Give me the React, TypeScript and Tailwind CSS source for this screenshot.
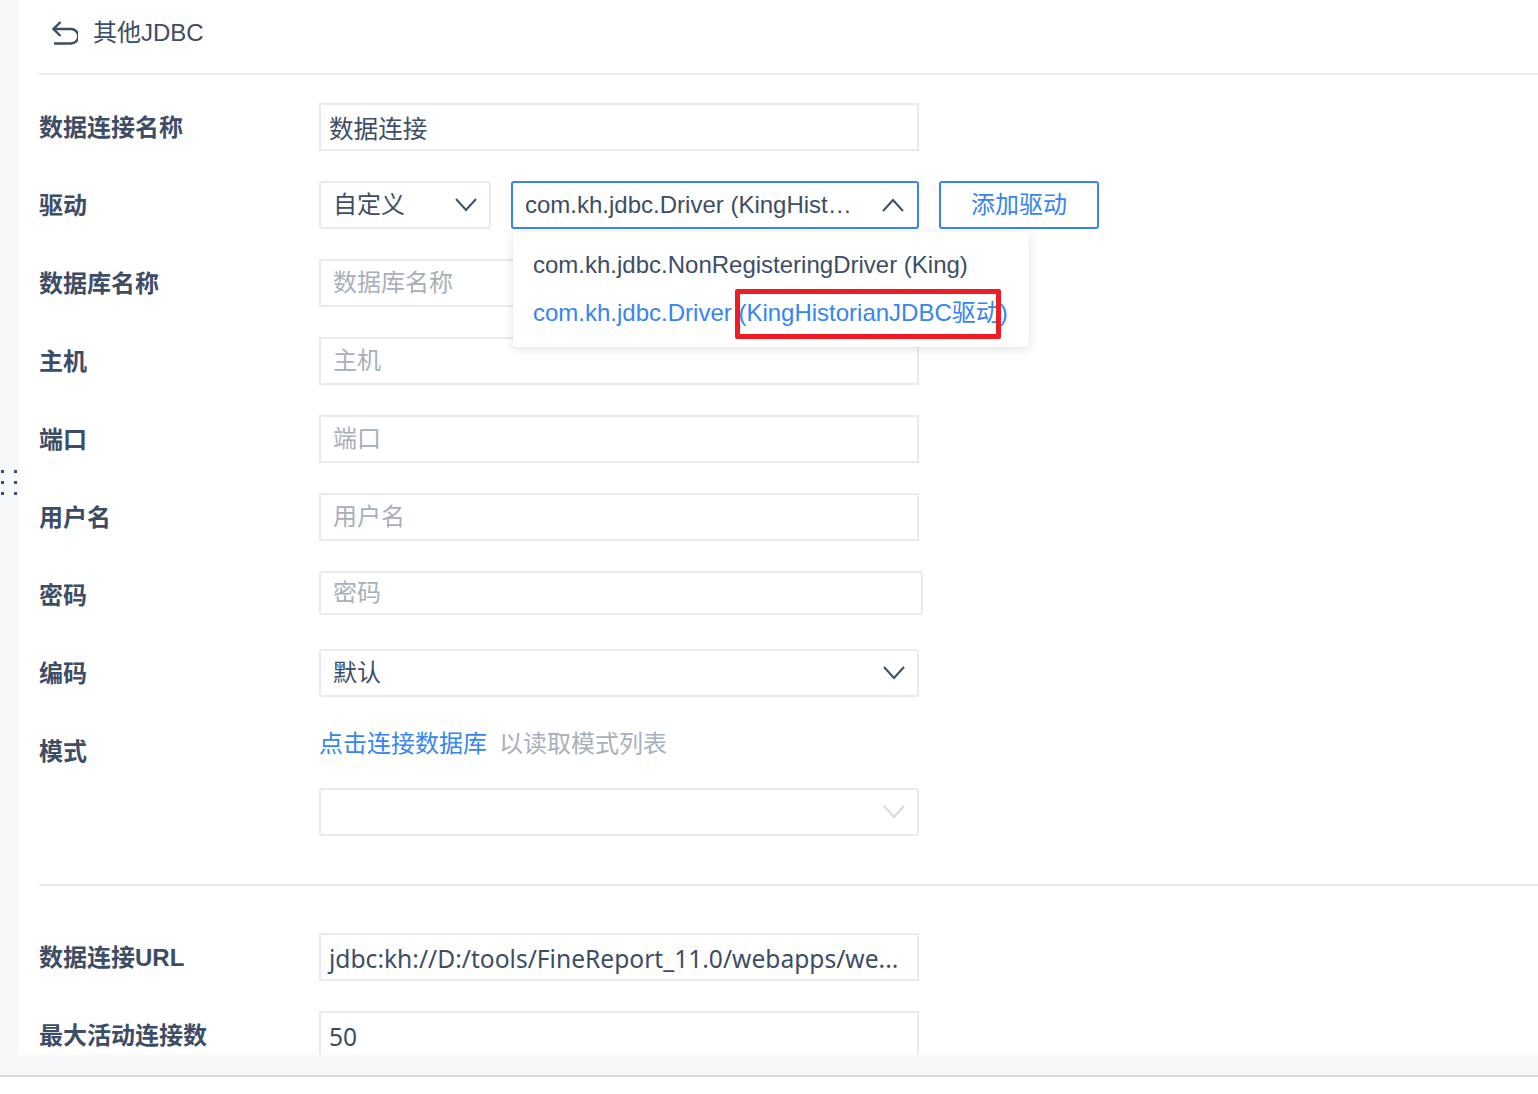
const font = "font-['Liberation_Sans','Noto_Sans_CJK_SC',sans-serif]";
const labelCls = 'w-[280px] shrink-0 h-[48px] leading-[50px] text-[24px] font-bold text-[#3d4d66]';

function Chevron({ up = false, light = false }: { up?: boolean; light?: boolean }) {
  return (
    <svg width="24" height="16" viewBox="0 0 24 16" fill="none" stroke={light ? '#d5d9e0' : '#3d4d66'} strokeWidth="2">
      <path d={up ? 'M2 14 L12 3 L22 14' : 'M2 2 L12 13 L22 2'} />
    </svg>
  );
}

function Row({ label, children }: { label: string; children: React.ReactNode }) {
  return (
    <div className="flex mb-[30px]">
      <div className={labelCls}>{label}</div>
      {children}
    </div>
  );
}

function Input({ placeholder, h = 'h-[48px]', w = 'w-[600px]', rounded = '' }: { placeholder: string; h?: string; w?: string; rounded?: string }) {
  return (
    <div className={`${w} ${h} border-2 border-[#e8eaed] ${rounded} bg-white flex items-center text-[24px] whitespace-nowrap pl-[12px] text-[#a8afbb]`}>
      {placeholder}
    </div>
  );
}

function ValueInput({ value }: { value: string }) {
  return (
    <div className="w-[600px] h-[48px] border-2 border-[#e8eaed] bg-white text-[24.6px] leading-[48px] font-['Noto_Sans','Noto_Sans_CJK_SC',sans-serif] whitespace-nowrap overflow-hidden pl-[8px] text-[#3d4d66]">
      {value}
    </div>
  );
}

function Select({ value, w = 'w-[600px]', light = false }: { value?: string; w?: string; light?: boolean }) {
  return (
    <div className={`${w} h-[48px] border-2 border-[#e8eaed] rounded-[3px] bg-white flex items-center justify-between pl-[12px] pr-[11px] text-[24px] text-[#3d4d66]`}>
      <span>{value}</span>
      <Chevron light={light} />
    </div>
  );
}

export default function App() {
  return (
    <div className={`${font} h-[1094px] w-[1538px] overflow-hidden bg-white`}>
      <div className="h-[1075px] bg-[#f7f8fa] border-b-2 border-[#d8d9dc] box-content flex relative">
        <div className="w-[19px] shrink-0">
          <div className="absolute left-[1px] top-[470px] grid grid-cols-2 gap-x-[10px] gap-y-[8px]">
            {[0, 1, 2, 3, 4, 5].map((i) => (
              <span key={i} className="w-[3px] h-[3px] bg-[#3d4d80]" />
            ))}
          </div>
        </div>
        <div className="h-[1055px] flex-1 bg-white overflow-hidden pl-[20px] relative">
          <div className="h-[75px] border-b-2 border-[#e8eaed] flex items-center pb-[8px]">
            <svg className="ml-[13px]" width="26" height="24" viewBox="0 0 26 24" fill="none" stroke="#3d4d66" strokeWidth="2.4">
              <path d="M8.5 1 L1.5 8 L8.5 15" />
              <path d="M1.5 8 H19 A7 7 0 0 1 19 22.5 H2" />
            </svg>
            <span className="ml-[15px] text-[24px] text-[#3d4d66]">其他JDBC</span>
          </div>

          <div className="pt-[28px]">
            <Row label="数据连接名称"><ValueInput value="数据连接" /></Row>
            <Row label="驱动">
              <div className="flex relative">
                <Select value="自定义" w="w-[172px]" />
                <div className="ml-[20px] w-[408px] h-[48px] border-2 border-[#3685f2] rounded-[3px] flex items-center pl-[12px] pr-[12px] text-[24px] text-[#3d4d66]">
                  <span className="w-[328px] truncate">com.kh.jdbc.Driver (KingHistorianJDBC驱动)</span>
                  <span className="ml-auto flex"><Chevron up /></span>
                </div>
                <div className="ml-[20px] w-[160px] h-[48px] border-2 border-[#3685f2] rounded-[3px] flex items-center justify-center text-[24px] text-[#3685f2]">添加驱动</div>
                <div className="absolute left-[194px] top-[51px] z-10 w-[516px] h-[115px] bg-white rounded-[4px] shadow-[0_2px_10px_rgba(61,77,102,0.18)] pt-[9px] text-[24px] whitespace-nowrap pl-[20px]">
                  <div className="h-[48px] leading-[48px] text-[#3d4d66]">com.kh.jdbc.NonRegisteringDriver (King)</div>
                  <div className="h-[48px] leading-[48px] text-[#3685f2]">com.kh.jdbc.Driver (KingHistorianJDBC驱动)</div>
                </div>
                <div className="absolute left-[416px] top-[108px] z-20 w-[266px] h-[50px] border-[5px] border-[#ee1c25] rounded-[2px]" />
              </div>
            </Row>
            <Row label="数据库名称"><Input placeholder="数据库名称" /></Row>
            <Row label="主机"><Input placeholder="主机" /></Row>
            <Row label="端口"><Input placeholder="端口" /></Row>
            <Row label="用户名"><Input placeholder="用户名" /></Row>
            <Row label="密码"><Input placeholder="密码" h="h-[44px]" w="w-[604px]" rounded="rounded-[3px]" /></Row>
            <Row label="编码"><Select value="默认" /></Row>
            <div className="flex h-[61px]">
              <div className={labelCls}>模式</div>
              <div className="text-[24px] h-[34px] leading-[34px]">
                <span className="text-[#3685f2]">点击连接数据库</span>
                <span className="ml-[12px] text-[#a8afbb]">以读取模式列表</span>
              </div>
            </div>
            <div className="flex">
              <div className="w-[280px] shrink-0" />
              <Select light />
            </div>
            <div className="h-[2px] bg-[#e8eaed] mt-[48px] mb-[47px]" />
            <Row label="数据连接URL"><ValueInput value="jdbc:kh://D:/tools/FineReport_11.0/webapps/we..." /></Row>
            <Row label="最大活动连接数"><ValueInput value="50" /></Row>
          </div>
        </div>
      </div>
    </div>
  );
}
